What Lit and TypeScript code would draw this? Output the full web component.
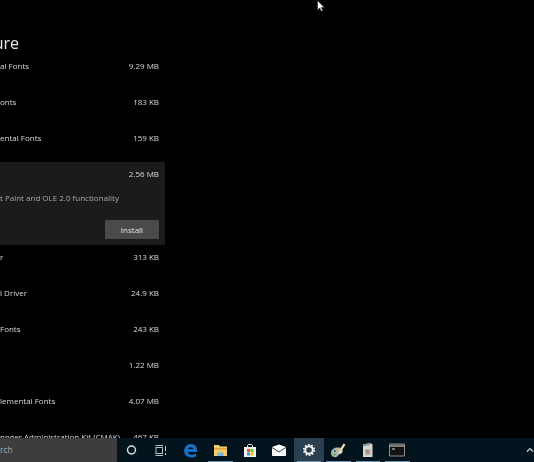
import { LitElement, html, css } from "lit";
import { customElement } from "lit/decorators.js";

const rows1 = [
  ["al Fonts", "9.29 MB"],
  ["onts", "183 KB"],
  ["ental Fonts", "159 KB"],
];
const rows2 = [
  ["r", "313 KB"],
  ["l Driver", "24.9 KB"],
  ["Fonts", "243 KB"],
  ["", "1.22 MB"],
  ["lemental Fonts", "4.07 MB"],
  ["nnger Administration Kit (CMAK)", "467 KB"],
];

@customElement("app-root")
export class AppRoot extends LitElement {
  static styles = css`
    :host {
      display: block;
      position: relative;
      width: 534px;
      height: 462px;
      background: #000;
      overflow: hidden;
      font-family: "Open Sans", "Noto Sans", sans-serif;
      color: #dadada;
      font-size: 8px;
    }
    .page { width: 165px; height: 438px; overflow: hidden; display: flex; flex-direction: column; filter: blur(0.25px); }
    .title { margin: 31px 0 0 0; height: 25px; flex: none; width: 19px; display: flex; justify-content: flex-end; font-size: 16px; line-height: 24px; color: #e8e8e8; white-space: nowrap; }
    .rows { padding-top: 1px; display: flex; flex-direction: column; flex: none; }
    .row { height: 36px; box-sizing: border-box; padding: 3px 6px 0 0; display: flex; justify-content: space-between; line-height: 12px; white-space: nowrap; flex: none; }
    .sel { height: 83px; flex: none; margin: -3px 0 3px; background: #1b1b1b; box-sizing: border-box; padding: 6px 6px 6px 0; display: flex; flex-direction: column; }
    .sel .top { display: flex; justify-content: flex-end; line-height: 12px; }
    .desc { margin-top: 12px; line-height: 12px; color: #a8a8a8; white-space: nowrap; }
    .btn { margin-top: auto; align-self: flex-end; width: 54px; height: 19px; background: #4a4a4a; color: #e4e4e4; display: flex; align-items: center; justify-content: center; }
    .bar { position: absolute; left: 0; right: 0; bottom: 0; height: 24px; background: #04141f; display: flex; align-items: stretch; }
    .search { width: 117px; background: #3d3d3d; color: #a4a4a4; line-height: 24px; flex: none; font-size: 8.5px; }
    .icons { display: flex; }
    .ic { position: relative; width: 29.5px; height: 24px; display: flex; align-items: center; justify-content: center; flex: none; box-sizing: border-box; }
    .ic.on { background: #2a3f4f; }
    .ic.open::after { content: ""; position: absolute; left: 2.5px; right: 2.5px; bottom: 0; height: 1px; background: #6b97b5; }
    .tray { margin-left: auto; display: flex; align-items: center; }
    svg { display: block; }
    .cursor { position: absolute; left: 317px; top: 0; }
  `;

  row(r: string[]) {
    return html`<div class="row"><span>${r[0]}</span><span>${r[1]}</span></div>`;
  }

  render() {
    return html`
      <div class="page">
        <div class="title"><span>ure</span></div>
        <div class="rows">
          ${rows1.map((r) => this.row(r))}
          <div class="sel">
            <div class="top"><span>2.56 MB</span></div>
            <div class="desc">t Paint and OLE 2.0 functionality</div>
            <div class="btn">Install</div>
          </div>
          ${rows2.map((r) => this.row(r))}
        </div>
      </div>
      <svg class="cursor" width="9" height="12" viewBox="0 0 9 12">
        <path d="M.5.5v9.500l2.200-2 1.500 3.300 1.600-.7-1.500-3.200h3z" fill="#fff" stroke="#222" stroke-width=".6"/>
      </svg>
      <div class="bar">
        <div class="search">rch</div>
        <div class="icons">
          <div class="ic">
            <svg width="12" height="12" viewBox="0 0 12 12"><circle cx="5.500" cy="6" r="4" fill="none" stroke="#dfe4e7" stroke-width="1.400"/></svg>
          </div>
          <div class="ic">
            <svg width="12" height="11" viewBox="0 0 12 11" fill="none" stroke="#b9c1c6"><rect x="1" y="2.500" width="6.500" height="6"/><path d="M.5.500h7.500M.5 10.500h7.500M10.500 1v5M10.500 8v2"/></svg>
          </div>
          <div class="ic">
            <svg width="15" height="15" viewBox="0 0 15 15"><path d="M1 8C1.500 3.500 4.500 1 8 1c3.800 0 6 2.800 6 6.500V9H5c.3 3 4.500 3.500 8 1.500v3C8.500 15.500 1.500 14.500 1 8zm4.200-2h5C10 3.500 6 3.500 5.200 6z" fill="#1a6fc4"/></svg>
          </div>
          <div class="ic open">
            <svg width="15" height="13" viewBox="0 0 15 13"><path d="M1 1h5l1 1.500h7V12H1z" fill="#f0cd6e"/><path d="M1 4h13v1.500H1z" fill="#d6a63f"/><path d="M4.500 8.500h6V12h-6z" fill="#78b8d6"/></svg>
          </div>
          <div class="ic">
            <svg width="14" height="15" viewBox="0 0 14 15"><path d="M4.500 4V2.500C4.500 1 9.500 1 9.500 2.500V4" fill="none" stroke="#f2f2f2"/><path d="M1 4h12v10H1z" fill="#f4f4f4"/><path d="M4 6h3v3H4z" fill="#e8532a"/><path d="M7.500 6h3v3h-3z" fill="#7fba2a"/><path d="M4 9.500h3v3H4z" fill="#20a3e0"/><path d="M7.500 9.500h3v3h-3z" fill="#f5b91c"/></svg>
          </div>
          <div class="ic">
            <svg width="16" height="12" viewBox="0 0 16 12"><path d="M1 3 8 .5 15 3v9H1z" fill="#fff"/><path d="M1 3.500 8 8l7-4.500" fill="none" stroke="#30404c"/><path d="M1 12l5.500-5M15 12 9.500 7" stroke="#c8d0d6" stroke-width=".6"/></svg>
          </div>
          <div class="ic on open">
            <svg width="14" height="14" viewBox="0 0 14 14"><circle cx="7" cy="7" r="3.800" fill="none" stroke="#f4f4f4" stroke-width="2"/><circle cx="7" cy="7" r="5.300" fill="none" stroke="#f4f4f4" stroke-width="1.600" stroke-dasharray="1.700 1.630"/></svg>
          </div>
          <div class="ic open">
            <svg width="18" height="17" viewBox="0 0 18 17"><path d="M2 11c0-4 4-6 8-5.500 3 .4 4.500 2.500 3.500 5-1 2-3 1-4 2.500-.8 1.500-2 2.500-4.500 2C3 14.500 2 13 2 11z" fill="#aeb8a8"/><circle cx="6" cy="9" r="1.200" fill="#3f7fb0"/><circle cx="9.500" cy="8" r="1.100" fill="#d9c25a"/><circle cx="5.500" cy="12.500" r="1.100" fill="#5a8a4a"/><path d="M9 10.500 14.500 1.500l2 1L11 11.500z" fill="#e8dfb8"/></svg>
          </div>
          <div class="ic open">
            <svg width="13" height="16" viewBox="0 0 13 16"><path d="M2 2.500 9.500 1l2 1.500V15H2z" fill="#d6d6d2"/><path d="M2 2.500 9.500 1v2L2 4.500z" fill="#8f9a9e"/><path d="M4 7h5.500v6H4z" fill="#a9b4a8"/><circle cx="6.700" cy="9.500" r="1.500" fill="#c77b5a"/></svg>
          </div>
          <div class="ic open">
            <svg width="16" height="14" viewBox="0 0 16 14"><path d="M.5 1h15v12H.5z" fill="#141414" stroke="#8c8c8c"/><path d="M1 1.500h14v2.500H1z" fill="#7d7d7d"/><path d="M3 6h3" stroke="#e0e0e0"/></svg>
          </div>
        </div>
        <div class="tray">
          <svg width="8" height="6" viewBox="0 0 8 6"><path d="M1 4.500 4 1.500l3 3" fill="none" stroke="#cfd6da" stroke-width="1.200"/></svg>
        </div>
      </div>
    `;
  }
}
